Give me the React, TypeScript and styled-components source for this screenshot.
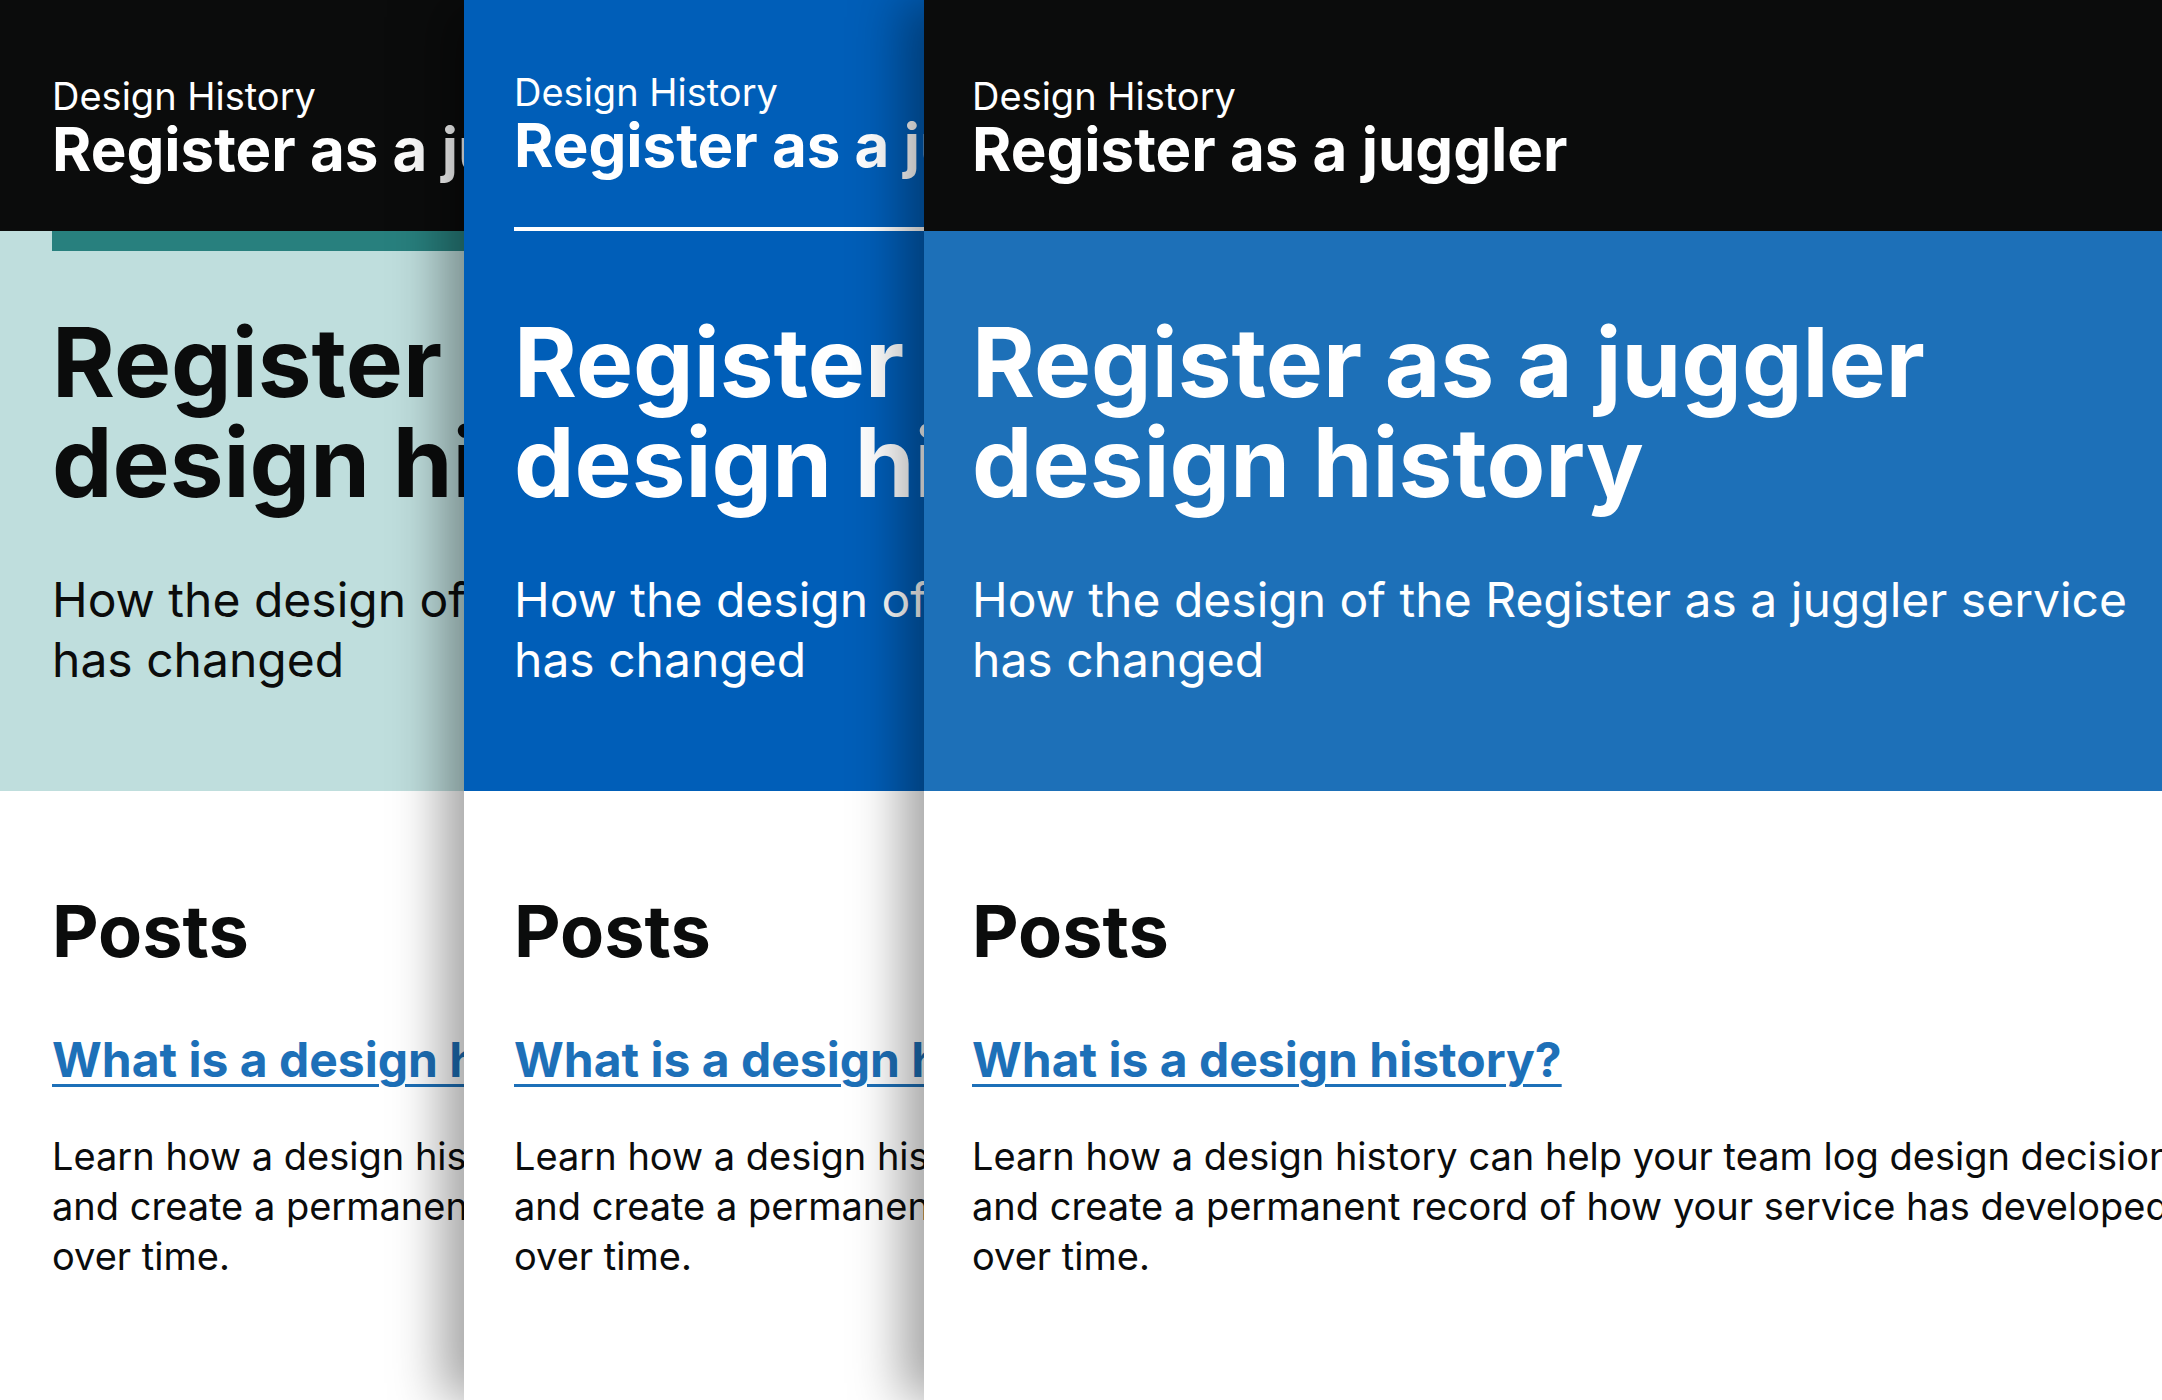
import React from "react";
import styled, { createGlobalStyle, css } from "styled-components";

const GlobalStyle = createGlobalStyle`
  html, body {
    margin: 0;
    padding: 0;
    background: #ffffff;
  }
  body {
    font-family: Inter, "Noto Sans", "Liberation Sans", sans-serif;
    color: #0b0c0c;
    -webkit-font-smoothing: antialiased;
  }
  * { box-sizing: border-box; }
`;

const Stage = styled.main`
  display: flex;
  width: 2162px;
  height: 1400px;
  overflow: hidden;
`;

const Panel = styled.section<{ $width: number; $z: number; $shadow?: boolean }>`
  position: relative;
  flex: none;
  width: ${(p) => p.$width}px;
  height: 100%;
  overflow: hidden;
  background: #ffffff;
  z-index: ${(p) => p.$z};
  ${(p) =>
    p.$shadow &&
    css`
      box-shadow: -22px 0 48px rgba(0, 0, 0, 0.36);
    `}
`;

const Page = styled.div`
  width: 1420px;
`;

const Header = styled.header<{ $bg: string; $top: number; $inset: number }>`
  display: flex;
  flex-direction: column;
  height: 231px;
  padding: ${(p) => p.$top}px ${(p) => p.$inset}px 0;
  background: ${(p) => p.$bg};
  color: #ffffff;
`;

const Service = styled.div`
  font-size: 38px;
  line-height: 42px;
  font-weight: 400;
`;

const Title = styled.div`
  font-size: 60px;
  line-height: 64px;
  font-weight: 700;
  white-space: nowrap;
`;

const HeaderRule = styled.div`
  margin-top: auto;
  height: 4px;
  background: #ffffff;
`;

const Hero = styled.div<{ $bg: string; $fg: string; $inset: number }>`
  background: ${(p) => p.$bg};
  color: ${(p) => p.$fg};
  padding: 0 ${(p) => p.$inset}px 101px;
`;

const Accent = styled.div<{ $color?: string }>`
  height: 20px;
  background: ${(p) => p.$color ?? "transparent"};
`;

const HeroTitle = styled.h1`
  margin: 61px 0 0;
  max-width: 1100px;
  font-size: 96px;
  line-height: 100px;
  font-weight: 700;
`;

const Lead = styled.p`
  margin: 58px 0 0;
  max-width: 1200px;
  font-size: 48px;
  line-height: 60px;
  font-weight: 400;
`;

const Content = styled.div<{ $inset: number }>`
  padding: 100px ${(p) => p.$inset}px 0;
`;

const SectionTitle = styled.h2`
  margin: 0;
  font-size: 72px;
  line-height: 80px;
  font-weight: 700;
  color: #0b0c0c;
`;

const PostTitle = styled.h3`
  margin: 64px 0 0;
  font-size: 48px;
  line-height: 50px;
  font-weight: 700;
`;

const PostLink = styled.a`
  color: #1d70b8;
  text-decoration: underline;
  text-decoration-thickness: 3px;
  text-underline-offset: 7px;
`;

const PostSummary = styled.p`
  margin: 46px 0 0;
  max-width: 1250px;
  font-size: 38px;
  line-height: 50px;
  font-weight: 400;
  color: #0b0c0c;
`;

type Theme = {
  width: number;
  z: number;
  shadow?: boolean;
  inset: number;
  headerBg: string;
  headerTop: number;
  rule?: boolean;
  heroBg: string;
  heroFg: string;
  accent?: string;
};

const themes: Theme[] = [
  {
    width: 464,
    z: 1,
    inset: 52,
    headerBg: "#0b0c0c",
    headerTop: 75,
    heroBg: "#bfdedd",
    heroFg: "#0b0c0c",
    accent: "#28807e",
  },
  {
    width: 460,
    z: 2,
    shadow: true,
    inset: 50,
    headerBg: "#005eb8",
    headerTop: 71,
    rule: true,
    heroBg: "#005eb8",
    heroFg: "#ffffff",
  },
  {
    width: 1238,
    z: 3,
    shadow: true,
    inset: 48,
    headerBg: "#0b0c0c",
    headerTop: 75,
    heroBg: "#1d70b8",
    heroFg: "#ffffff",
  },
];

function DesignHistoryPage({ t }: { t: Theme }) {
  return (
    <Panel $width={t.width} $z={t.z} $shadow={t.shadow}>
      <Page>
        <Header $bg={t.headerBg} $top={t.headerTop} $inset={t.inset}>
          <Service>Design History</Service>
          <Title>Register as a juggler</Title>
          {t.rule && <HeaderRule />}
        </Header>
        <Hero $bg={t.heroBg} $fg={t.heroFg} $inset={t.inset}>
          <Accent $color={t.accent} />
          <HeroTitle>Register as a juggler design history</HeroTitle>
          <Lead>How the design of the Register as a juggler service has changed</Lead>
        </Hero>
        <Content $inset={t.inset}>
          <SectionTitle>Posts</SectionTitle>
          <PostTitle>
            <PostLink href="#">What is a design history?</PostLink>
          </PostTitle>
          <PostSummary>
            Learn how a design history can help your team log design decisions and create a
            permanent record of how your service has developed over time.
          </PostSummary>
        </Content>
      </Page>
    </Panel>
  );
}

export default function App() {
  return (
    <>
      <GlobalStyle />
      <Stage>
        {themes.map((t, i) => (
          <DesignHistoryPage key={i} t={t} />
        ))}
      </Stage>
    </>
  );
}
